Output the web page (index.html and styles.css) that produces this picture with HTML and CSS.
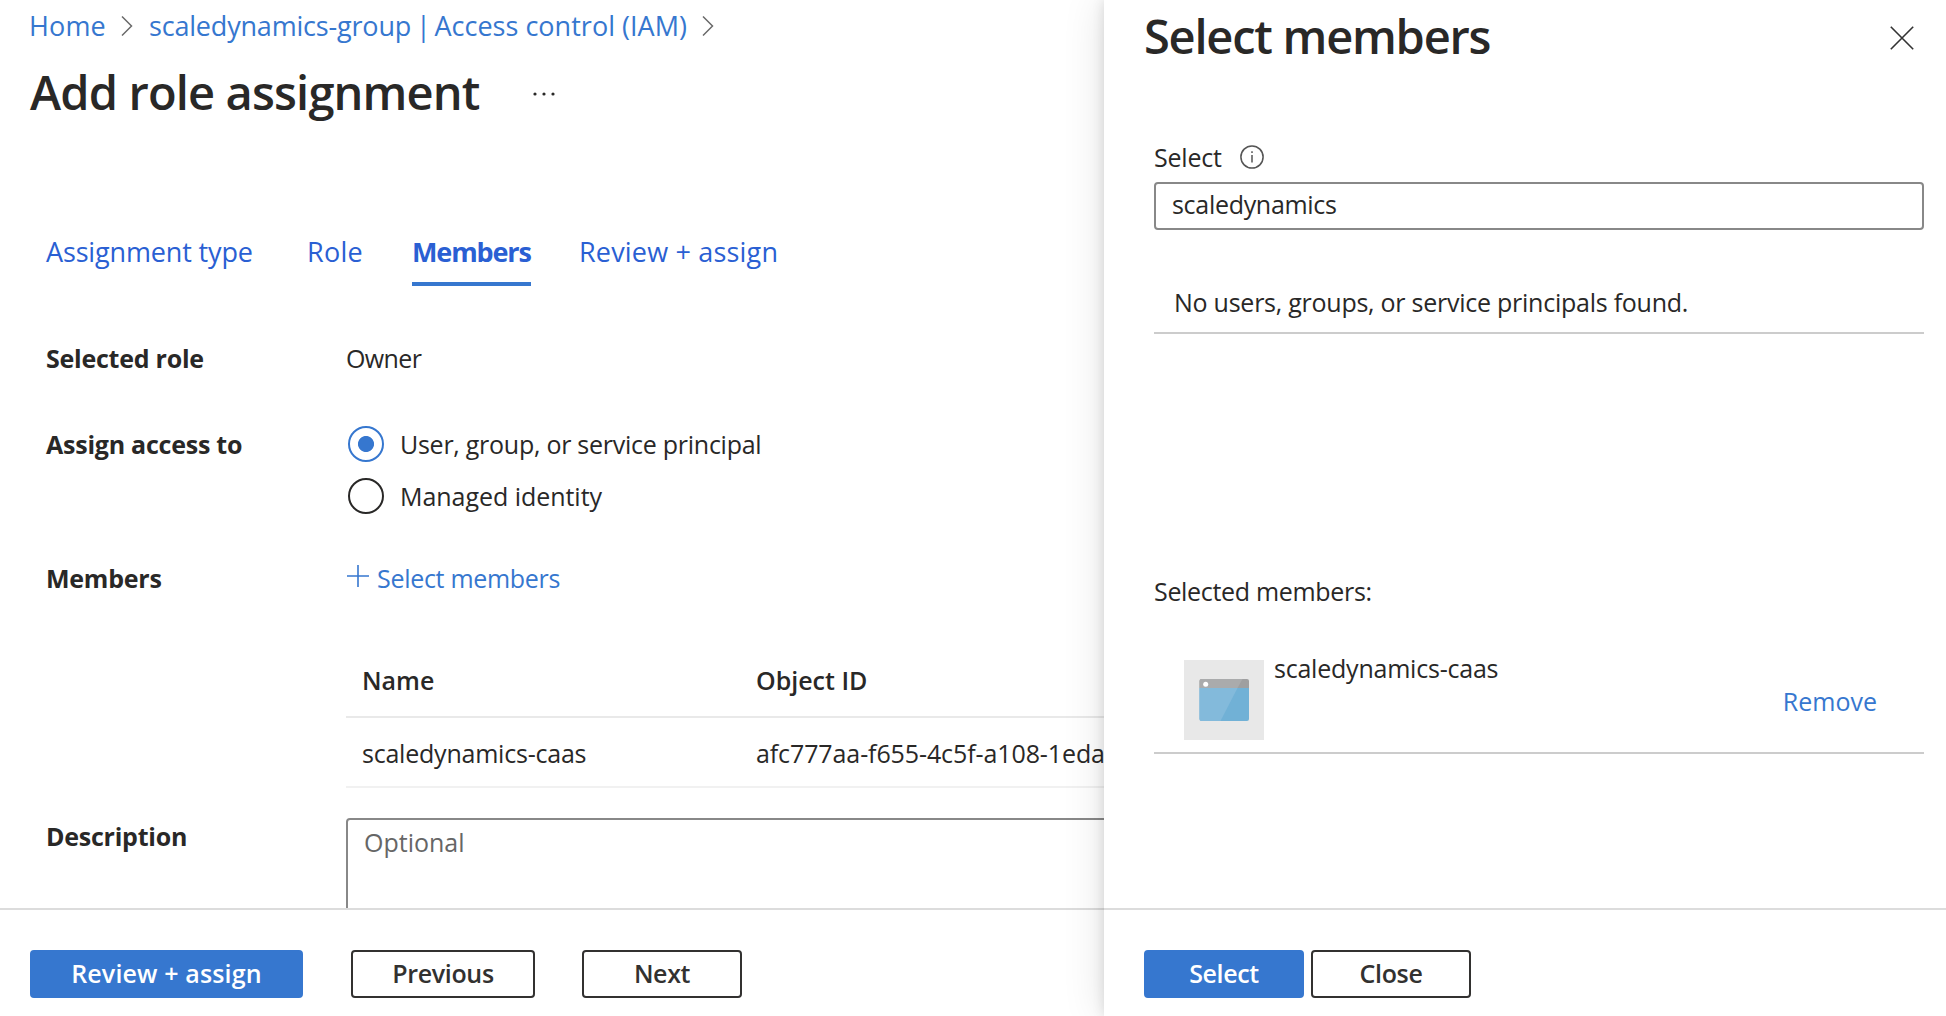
FILE: index.html
```html
<!DOCTYPE html>
<html lang="en">
<head>
<meta charset="utf-8">
<title>Add role assignment</title>
<link rel="stylesheet" href="styles.css">
</head>
<body>
<main class="blade">
  <div class="blade-content">
    <nav class="breadcrumb">
      <a class="crumb-home">Home</a>
      <svg class="chevron" width="12" height="20" viewBox="0 0 12 20"><path d="M1 .5 10.5 10 1 19.5"/></svg>
      <a class="crumb-group">scaledynamics-group <span class="crumb-bar">|</span> <span class="crumb-section">Access control (IAM)</span></a>
      <svg class="chevron" width="12" height="20" viewBox="0 0 12 20"><path d="M1 .5 10.5 10 1 19.5"/></svg>
    </nav>
    <header class="blade-header">
      <h1 class="blade-title">Add role assignment</h1>
      <svg class="more" width="24" height="4" viewBox="0 0 24 4"><circle cx="2" cy="2" r="1.6"/><circle cx="11" cy="2" r="1.6"/><circle cx="20" cy="2" r="1.6"/></svg>
    </header>
    <div class="tabs">
      <a class="tab tab-type">Assignment type</a>
      <a class="tab tab-role">Role</a>
      <a class="tab tab-active">Members</a>
      <a class="tab tab-review">Review + assign</a>
    </div>
    <section class="form">
      <div class="row row-role">
        <div class="label">Selected role</div>
        <div class="owner">Owner</div>
      </div>
      <div class="row row-access">
        <div class="label">Assign access to</div>
        <div class="radios">
          <div class="option"><span class="radio radio-on"></span><span class="option-text">User, group, or service principal</span></div>
          <div class="option"><span class="radio"></span><span class="option-text option-managed">Managed identity</span></div>
        </div>
      </div>
      <div class="row row-members">
        <div class="label">Members</div>
        <div>
          <a class="add-link"><svg width="24" height="24" viewBox="0 0 24 24"><path d="M12 1v22M1 12h22"/></svg><span>Select members</span></a>
          <div class="table">
            <div class="table-row table-head"><span>Name</span><span>Object ID</span></div>
            <div class="table-row table-body"><span>scaledynamics-caas</span><span class="guid">afc777aa-f655-4c5f-a108-1eda</span></div>
          </div>
        </div>
      </div>
      <div class="row row-description">
        <div class="label">Description</div>
        <div class="textarea">Optional</div>
      </div>
    </section>
  </div>
  <footer class="footer blade-footer">
    <button class="btn btn-primary btn-review">Review + assign</button>
    <button class="btn btn-previous">Previous</button>
    <button class="btn btn-next">Next</button>
  </footer>
</main>
<aside class="panel">
  <div class="panel-content">
    <header class="panel-header">
      <h2 class="panel-title">Select members</h2>
      <svg class="close" width="24" height="24" viewBox="0 0 24 24"><path d="M.8.8l22.4 22.4M23.2.8.8 23.2"/></svg>
    </header>
    <div class="panel-body">
      <div class="field-label"><span>Select</span>
        <svg class="info" width="24" height="24" viewBox="0 0 24 24"><circle cx="12" cy="12" r="11.1"/><path d="M12 10v7.5M12 6.2v1.8"/></svg>
      </div>
      <div class="input">scaledynamics</div>
      <div class="result">No users, groups, or service principals found.</div>
      <div class="selected-title">Selected members:</div>
      <div class="member">
        <svg class="avatar" width="80" height="80" viewBox="0 0 80 80">
          <rect width="80" height="80" fill="#e8e8e8"/>
          <path d="M15.5 28H65v31a2 2 0 0 1-2 2H17.5a2 2 0 0 1-2-2z" fill="#71b1d6"/>
          <path d="M15.5 28H53.5L36.5 61H17.5a2 2 0 0 1-2-2z" fill="#83badb"/>
          <path d="M15.5 28v-7a2 2 0 0 1 2-2H63a2 2 0 0 1 2 2v7z" fill="#9f9fa0"/>
          <path d="M15.5 28v-7a2 2 0 0 1 2-2H58.5L53.5 28z" fill="#aaabac"/>
          <circle cx="21.700" cy="24.200" r="2.500" fill="#fff"/>
        </svg>
        <div class="member-name">scaledynamics-caas</div>
        <a class="remove">Remove</a>
      </div>
    </div>
  </div>
  <footer class="footer panel-footer">
    <button class="btn btn-primary btn-select">Select</button>
    <button class="btn btn-close">Close</button>
  </footer>
</aside>
</body>
</html>
```
FILE: styles.css
```css
* { box-sizing: border-box; }

body {
  margin: 0;
  height: 1016px;
  position: relative;
  overflow: hidden;
  background: #fff;
  color: #292827;
  font: 400 25px/36px "Open Sans", "Noto Sans", sans-serif;
  letter-spacing: -0.22px;
  white-space: nowrap;
}

h1, h2 { margin: 0; font-size: 47px; line-height: 60px; font-weight: 600; }
svg { flex: none; display: block; }

/* Main blade */
.blade { display: flex; flex-direction: column; height: 1016px; }
.blade-content { height: 908px; padding-top: 8px; overflow: hidden; }

.breadcrumb { display: flex; align-items: center; padding-left: 29px; font-size: 27px; color: #3677cf; }
.crumb-home { width: 92px; letter-spacing: 0.15px; }
.crumb-group { width: 553px; margin-left: 16px; letter-spacing: -0.19px; }
.crumb-bar { margin: 0 -3px 0 -2px; }
.crumb-section { letter-spacing: 0.02px; }
.chevron { fill: none; stroke: #6a6a6a; stroke-width: 1.5; }

.blade-header { display: flex; align-items: center; margin-top: 18px; padding-left: 30px; }
.blade-title { width: 503px; letter-spacing: -0.84px; }
.more { fill: #292827; margin-top: 4px; }

.tabs { display: flex; margin-top: 112px; padding-left: 46px; font-size: 27px; color: #2a5fd3; }
.tab { height: 52px; }
.tab-type { width: 261px; letter-spacing: -0.15px; }
.tab-role { width: 105px; letter-spacing: 0.3px; }
.tab-active { width: 119px; font-weight: 700; letter-spacing: -1.12px; border-bottom: 4px solid #3677cf; }
.tab-review { margin-left: 48px; letter-spacing: 0.18px; }

.row { display: grid; grid-template-columns: 300px 1fr; padding-left: 46px; }
.label { font-weight: 700; letter-spacing: -0.24px; }
.row-role { margin-top: 54px; }
.owner { letter-spacing: -0.6px; }
.row-access { margin-top: 50px; }
.radios { display: flex; flex-direction: column; gap: 16px; padding-left: 2px; }
.option { display: flex; align-items: center; gap: 16px; }
.radio { width: 36px; height: 36px; border: 2px solid #292827; border-radius: 50%; }
.radio-on { border-color: #3677cf; background: radial-gradient(circle, #3677cf 7.6px, transparent 8.4px); }
.option-text { letter-spacing: -0.26px; }
.option-managed { letter-spacing: -0.04px; }
.row-members { margin-top: 46px; }
.add-link { display: flex; gap: 7px; color: #3677cf; letter-spacing: -0.3px; }
.add-link svg { margin-top: 4px; fill: none; stroke: #3677cf; stroke-width: 1.6; }

.table { margin-top: 48px; }
.table-row { display: grid; grid-template-columns: 394px 1fr; padding-left: 16px; }
.table-head { padding-top: 18px; padding-bottom: 18px; font-weight: 600; letter-spacing: 0; border-bottom: 2px solid #e9e9e9; }
.table-body { padding-top: 17px; padding-bottom: 15px; border-bottom: 2px solid #f1f1f1; }
.guid { letter-spacing: -0.1px; }

.row-description { margin-top: 30px; }
.textarea { height: 122px; padding: 4px 16px; border: 2px solid #888; border-radius: 4px; color: #666; letter-spacing: 0; }

/* Footers and buttons */
.footer { display: flex; height: 108px; padding-top: 40px; border-top: 2px solid #dcdcdc; }
.blade-footer { padding-left: 30px; }
.btn {
  height: 48px;
  padding: 0 0 2px;
  border: 2px solid #323130;
  border-radius: 4px;
  background: #fff;
  color: #323130;
  font: inherit;
  font-weight: 600;
  letter-spacing: -0.35px;
}
.btn-primary { border-color: #3677cf; background: #3677cf; color: #fff; }
.btn-review { width: 273px; letter-spacing: 0.15px; }
.btn-previous { width: 184px; margin-left: 48px; }
.btn-next { width: 160px; margin-left: 47px; }
.btn-select { width: 160px; }
.btn-close { width: 160px; margin-left: 7px; }

/* Side panel over the blade */
.panel {
  position: absolute;
  top: 0;
  right: 0;
  width: 842px;
  height: 1016px;
  background: #fff;
  box-shadow: 0 0 40px rgba(0, 0, 0, 0.12), 0 0 12px rgba(0, 0, 0, 0.12);
}
.panel-content { height: 908px; padding-top: 6px; }
.panel-header { display: flex; align-items: center; justify-content: space-between; padding: 0 32px 0 40px; }
.panel-title { letter-spacing: -1.24px; }
.close { fill: none; stroke: #333; stroke-width: 1.6; margin-top: 4px; }
.panel-body { padding: 73px 22px 0 50px; }
.field-label { display: flex; align-items: center; gap: 18px; height: 36px; }
.info { fill: none; stroke: #555; stroke-width: 1.5; }
.input { height: 48px; margin-top: 7px; padding: 2px 16px; border: 2px solid #888; border-radius: 4px; letter-spacing: -0.3px; }
.result { margin-top: 54px; padding: 0 20px 12px; border-bottom: 2px solid #ccc; letter-spacing: -0.25px; }
.selected-title { margin-top: 239px; letter-spacing: -0.32px; }
.member { display: flex; height: 105px; margin-top: 40px; padding: 11px 47px 0 30px; border-bottom: 2px solid #ccc; }
.member-name { flex: 1; margin: -10px 0 0 10px; }
.remove { margin-top: 23px; color: #3677cf; letter-spacing: 0; }
.panel-footer { padding-left: 40px; }
```
